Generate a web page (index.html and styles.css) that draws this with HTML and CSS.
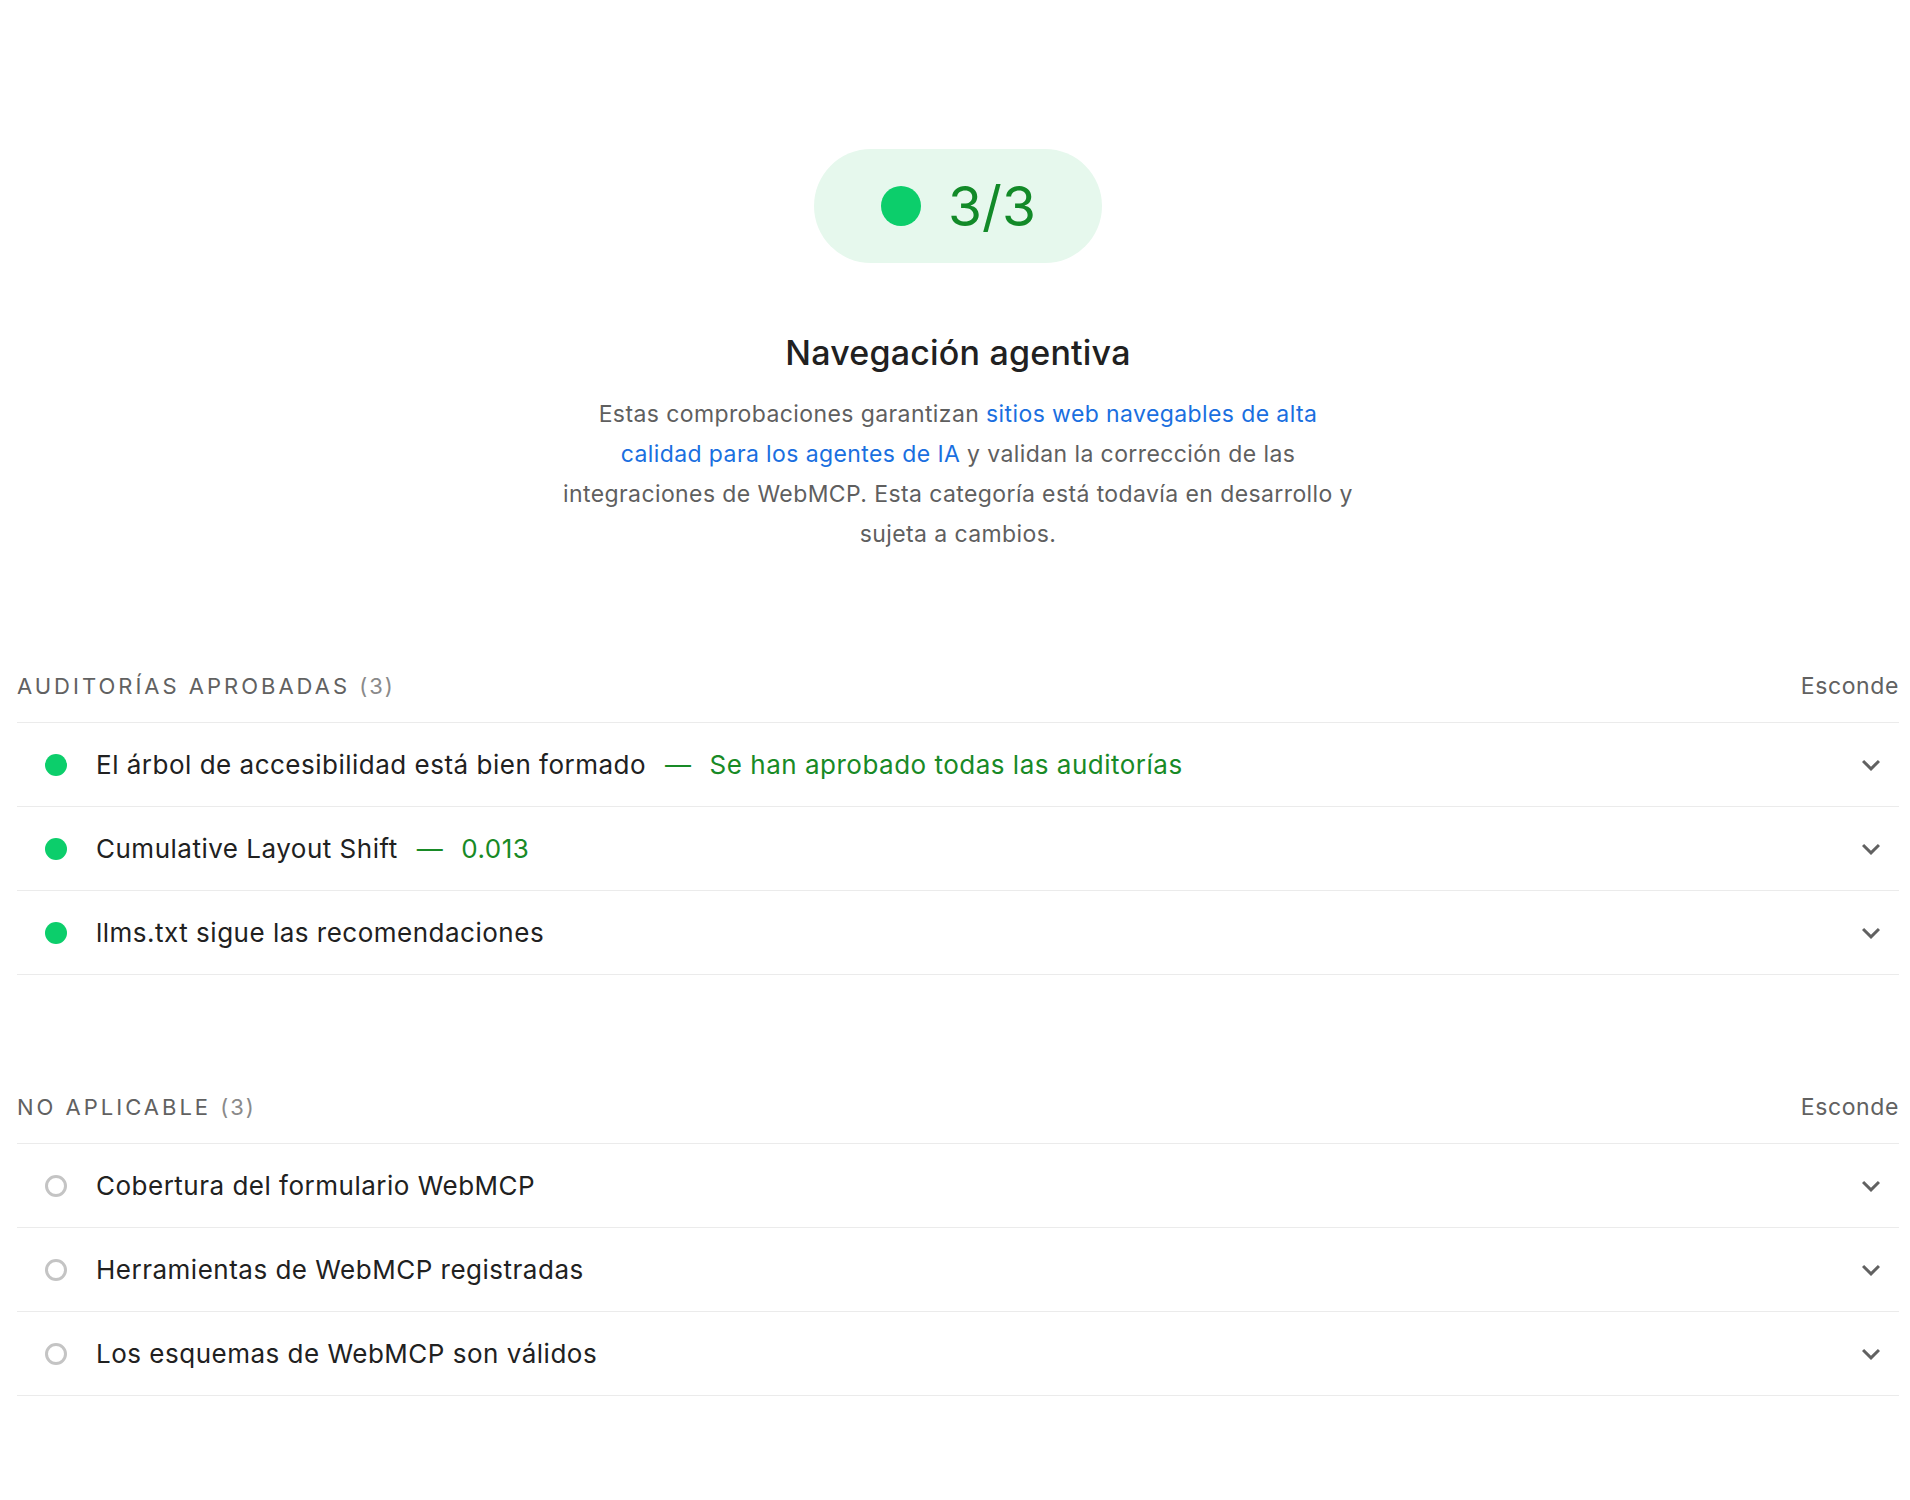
FILE: index.html
```html
<!DOCTYPE html>
<html lang="es">
<head>
<meta charset="utf-8">
<title>Navegación agentiva</title>
<link rel="stylesheet" href="styles.css">
</head>
<body>
<div class="page">
  <div class="summary">
    <div class="badge">
      <span class="badge-dot"></span>
      <span class="badge-text">3/3</span>
    </div>
    <h2 class="title">Navegación agentiva</h2>
    <p class="desc">Estas comprobaciones garantizan <a class="link" href="#">sitios web navegables de alta calidad para los agentes de IA</a> y validan la corrección de las integraciones de WebMCP. Esta categoría está todavía en desarrollo y sujeta a cambios.</p>
  </div>

  <section class="group group-first">
    <div class="group-header">
      <span class="group-title">Auditorías aprobadas <span class="count">(3)</span></span>
      <span class="toggle">Esconde</span>
    </div>
    <div class="audit">
      <span class="score score-pass"></span>
      <span class="audit-title">El árbol de accesibilidad está bien formado</span>
      <span class="display-text"><span class="dash">—</span>Se han aprobado todas las auditorías</span>
      <svg class="chevron" viewBox="0 0 24 24"><path d="M16.59 8.59L12 13.170 7.41 8.59 6 10l6 6 6-6z"/></svg>
    </div>
    <div class="audit">
      <span class="score score-pass"></span>
      <span class="audit-title">Cumulative Layout Shift</span>
      <span class="display-text"><span class="dash">—</span>0.013</span>
      <svg class="chevron" viewBox="0 0 24 24"><path d="M16.59 8.59L12 13.17 7.41 8.59 6 10l6 6 6-6z"/></svg>
    </div>
    <div class="audit">
      <span class="score score-pass"></span>
      <span class="audit-title">llms.txt sigue las recomendaciones</span>
      <svg class="chevron" viewBox="0 0 24 24"><path d="M16.59 8.59L12 13.17 7.41 8.59 6 10l6 6 6-6z"/></svg>
    </div>
  </section>

  <section class="group">
    <div class="group-header">
      <span class="group-title">No aplicable <span class="count">(3)</span></span>
      <span class="toggle">Esconde</span>
    </div>
    <div class="audit">
      <span class="score score-na"></span>
      <span class="audit-title">Cobertura del formulario WebMCP</span>
      <svg class="chevron" viewBox="0 0 24 24"><path d="M16.59 8.59L12 13.17 7.41 8.59 6 10l6 6 6-6z"/></svg>
    </div>
    <div class="audit">
      <span class="score score-na"></span>
      <span class="audit-title">Herramientas de WebMCP registradas</span>
      <svg class="chevron" viewBox="0 0 24 24"><path d="M16.59 8.59L12 13.17 7.41 8.59 6 10l6 6 6-6z"/></svg>
    </div>
    <div class="audit">
      <span class="score score-na"></span>
      <span class="audit-title">Los esquemas de WebMCP son válidos</span>
      <svg class="chevron" viewBox="0 0 24 24"><path d="M16.59 8.59L12 13.17 7.41 8.59 6 10l6 6 6-6z"/></svg>
    </div>
  </section>
</div>
</body>
</html>
```

FILE: styles.css
```css
html, body {
  margin: 0;
  padding: 0;
  background: #ffffff;
}

body {
  font-family: Inter, Roboto, "Liberation Sans", Arial, sans-serif;
  color: #212121;
}

.page {
  padding: 0 11px 80px 17px;
}

.summary {
  display: flex;
  flex-direction: column;
  align-items: center;
  padding-top: 149px;
}

.badge {
  width: 288px;
  height: 114px;
  border-radius: 57px;
  background: #e6f8ed;
  display: flex;
  align-items: center;
  justify-content: center;
  gap: 27px;
  box-sizing: border-box;
  padding-left: 1px;
}

.badge-dot {
  width: 40px;
  height: 40px;
  border-radius: 50%;
  background: #0cce6b;
}

.badge-text {
  font-size: 55px;
  line-height: 60px;
  color: #128a28;
}

.title {
  margin: 70px 0 0;
  font-size: 34px;
  line-height: 40px;
  font-weight: 500;
  letter-spacing: 0.2px;
  color: #212121;
}

.desc {
  margin: 21px 0 0;
  width: 790px;
  text-align: center;
  font-size: 23px;
  line-height: 40px;
  letter-spacing: 0.4px;
  color: #5f5f5f;
}

.link {
  color: #1a6fe0;
  text-decoration: none;
}

.group {
  margin-top: 117px;
}

.group-header {
  display: flex;
  justify-content: space-between;
  align-items: center;
  height: 30px;
  padding-bottom: 21px;
  border-bottom: 1px solid #ebebeb;
}

.group-title {
  font-size: 22px;
  text-transform: uppercase;
  letter-spacing: 3px;
  color: #616161;
}

.count {
  color: #8a8a8a;
  letter-spacing: 2px;
}

.toggle {
  font-size: 23px;
  letter-spacing: 0.6px;
  color: #616161;
}

.audit {
  display: flex;
  align-items: center;
  height: 83px;
  border-bottom: 1px solid #ebebeb;
  padding-left: 28px;
  padding-right: 10px;
}

.score {
  flex: none;
  width: 22px;
  height: 22px;
  border-radius: 50%;
  box-sizing: border-box;
  margin-right: 29px;
}

.score-pass {
  background: #0cce6b;
}

.score-na {
  border: 3.5px solid #c4c4c4;
  background: #fff;
}

.audit-title {
  font-size: 26px;
  letter-spacing: 0.5px;
  color: #212121;
}

.display-text {
  font-size: 26px;
  letter-spacing: 0.5px;
  color: #188a26;
  margin-left: 19px;
}

.dash {
  margin-right: 18px;
}

.chevron {
  margin-left: auto;
  width: 36px;
  height: 36px;
  fill: #616161;
}
```
